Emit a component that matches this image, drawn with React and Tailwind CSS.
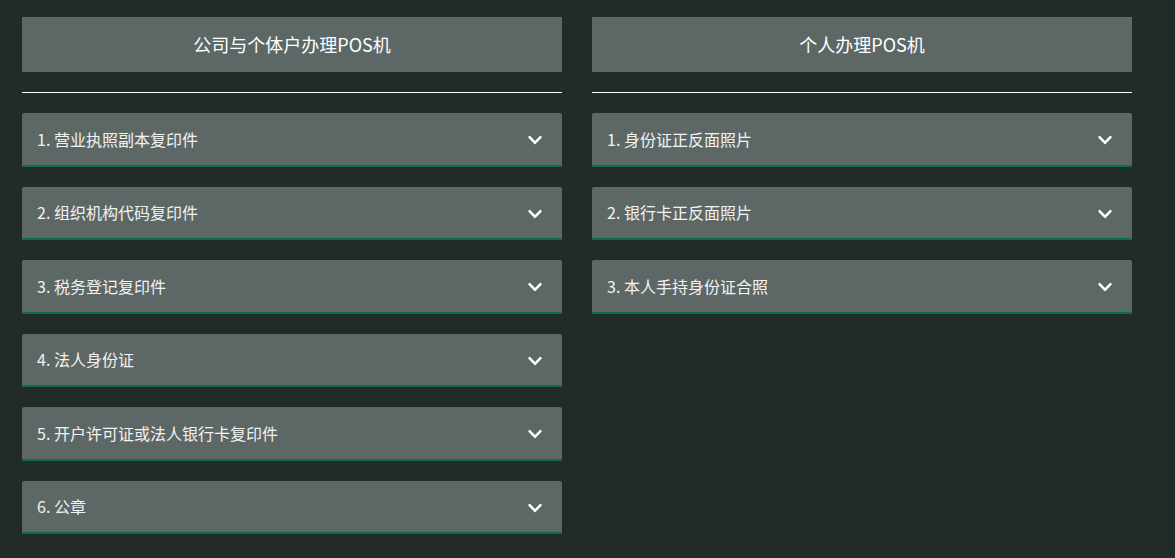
import { FaChevronDown } from 'react-icons/fa'

const company = ['1. 营业执照副本复印件', '2. 组织机构代码复印件', '3. 税务登记复印件', '4. 法人身份证', '5. 开户许可证或法人银行卡复印件', '6. 公章']
const personal = ['1. 身份证正反面照片', '2. 银行卡正反面照片', '3. 本人手持身份证合照']

function Column({ title, items }) {
  return (
    <div className="w-[540px]">
      <div className="h-[55px] bg-[#5d6866] flex items-center justify-center text-[18px] text-white">{title}</div>
      <div className="mt-[20px] h-px bg-white"></div>
      <div className="mt-[20px] flex flex-col gap-[20px]">
        {items.map(t => (
          <div key={t} className="h-[53.5px] rounded-t-[2px] bg-[#5d6866] border-b-2 border-[#0b6e4f] flex items-center justify-between pl-[15px] pr-[19px]">
            <span className="text-[16px] text-[#f2f2f2]">{t}</span>
            <FaChevronDown className="text-white w-[16px] h-[16px] mt-[3px]" />
          </div>
        ))}
      </div>
    </div>
  )
}

export default function App() {
  return (
    <div className="w-[1175px] h-[558px] bg-[#212b29] pt-[17px] pl-[22px] flex gap-[30px] overflow-hidden" style={{ fontFamily: '"Microsoft YaHei", "Noto Sans CJK SC", sans-serif' }}>
      <Column title="公司与个体户办理POS机" items={company} />
      <Column title="个人办理POS机" items={personal} />
    </div>
  )
}
